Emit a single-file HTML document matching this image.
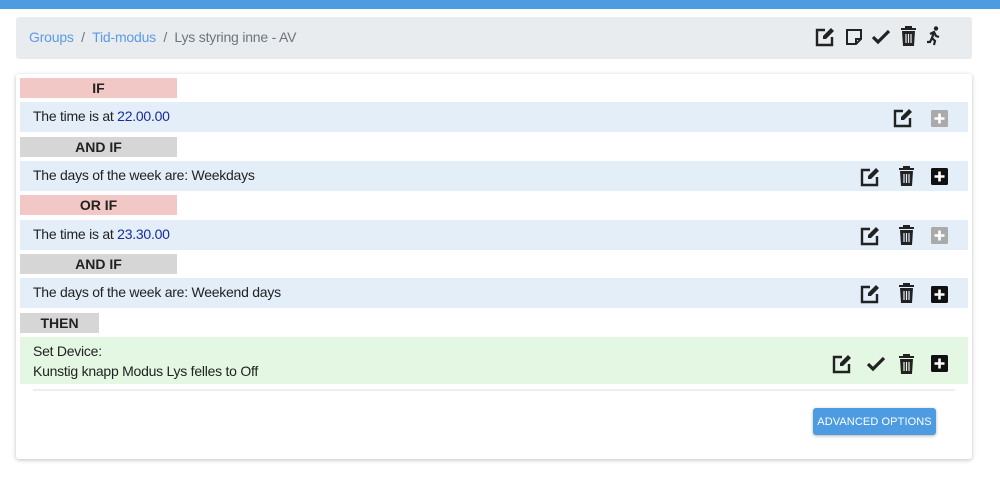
<!DOCTYPE html>
<html><head><meta charset="utf-8"><style>
*{box-sizing:border-box;margin:0;padding:0}
body{width:1000px;height:481px;background:#fff;font-family:"Liberation Sans",sans-serif;font-size:14px;color:#222;position:relative;overflow:hidden}
.abs{position:absolute}
.top{left:0;top:0;width:1000px;height:9px;background:#4d9be0}
.bc{left:16px;top:17px;width:956px;height:42px;background:#e9ecef;border-radius:3px}
.bc .t{position:absolute;left:13px;top:12px;font-size:14px;letter-spacing:-0.2px;color:#6c757d;white-space:nowrap}
.bc a{color:#5b9be6;text-decoration:none}
.card{left:16px;top:74px;width:956px;height:385px;background:#fff;border-radius:3px;box-shadow:0 1px 4px rgba(0,0,0,.25)}
.lab{position:absolute;left:20px;width:157px;height:20px;font-weight:bold;font-size:14px;text-align:center;line-height:20px;color:#222}
.pink{background:#f2c8c6}.gray{background:#d6d6d6}
.row{position:absolute;left:20px;width:948px;height:30px;background:#e3eef9;line-height:28px;padding-left:13px;font-size:14px;letter-spacing:-0.25px}
.blue{color:#1a2a9a}
svg{position:absolute}
.btn{left:813px;top:408px;width:123px;height:27px;background:#4d9be0;color:#fff;font-size:11px;text-align:center;line-height:29px;border-radius:3px;box-shadow:0 1px 3px rgba(0,0,0,.3);letter-spacing:.1px}
</style></head><body>
<div class="abs top"></div>
<div class="abs bc"><div class="t"><a>Groups</a>&nbsp; / &nbsp;<a>Tid-modus</a>&nbsp; / &nbsp;Lys styring inne - AV</div></div>
<div class="abs card"></div>

<div class="lab pink" style="top:78px">IF</div>
<div class="row" style="top:102px">The time is at <span class="blue">22.00.00</span></div>
<div class="lab gray" style="top:137px">AND IF</div>
<div class="row" style="top:161px">The days of the week are: Weekdays</div>
<div class="lab pink" style="top:195px">OR IF</div>
<div class="row" style="top:220px">The time is at <span class="blue">23.30.00</span></div>
<div class="lab gray" style="top:254px">AND IF</div>
<div class="row" style="top:278px">The days of the week are: Weekend days</div>
<div class="lab gray" style="top:313px;width:79px">THEN</div>
<div class="row" style="top:337px;height:47px;background:#e3f7e3;line-height:20px;padding-top:4px">Set Device:<br>Kunstig knapp Modus Lys felles to Off</div>
<div class="abs" style="left:33px;top:389px;width:922px;height:2px;background:#eee"></div>
<div class="abs btn">ADVANCED OPTIONS</div>

<svg style="left:815px;top:27px" width="20" height="20" viewBox="0 0 20 20"><path d="M10 3H2v15h15v-8" fill="none" stroke="#222" stroke-width="2.4"/><path d="M16 1l3 3-8 8H8V9z" fill="#222"/></svg>
<svg style="left:845px;top:28px" width="18" height="18" viewBox="0 0 18 18"><path d="M2 2h14v9l-5 5H2z" fill="none" stroke="#222" stroke-width="2"/><path d="M11 16v-5h5" fill="none" stroke="#222" stroke-width="2"/></svg>
<svg style="left:871px;top:29px" width="20" height="16" viewBox="0 0 20 16"><path d="M2 8l5 5L18 2" fill="none" stroke="#222" stroke-width="3.2"/></svg>
<svg style="left:900px;top:26px" width="17" height="20" viewBox="0 0 17 20"><path d="M1 3h15M6 3V1h5v2" stroke="#222" stroke-width="2" fill="none"/><path d="M2 5h13l-1 15H3z" fill="#222"/><path d="M6 8v9M8.5 8v9M11 8v9" stroke="#e9ecef" stroke-width="1.2"/></svg>
<svg style="left:926px;top:26px" width="16" height="20" viewBox="0 0 16 20"><circle cx="10" cy="2.5" r="2.2" fill="#222"/><path d="M4 8l4-2 2 4 3 1M8 6l-2 6 3 3-1 4M6 12l-2 4-3 0" fill="none" stroke="#222" stroke-width="2.2"/></svg>

<svg style="left:893px;top:108px" width="20" height="20" viewBox="0 0 20 20"><path d="M10 3H2v15h15v-8" fill="none" stroke="#222" stroke-width="2.4"/><path d="M16 1l3 3-8 8H8V9z" fill="#222"/></svg>
<svg style="left:931px;top:110px" width="17" height="17" viewBox="0 0 17 17"><rect width="17" height="17" rx="1.5" fill="#aaa"/><path d="M8.5 3.5v10M3.5 8.5h10" stroke="#fff" stroke-width="2.6"/></svg>

<svg style="left:860px;top:167px" width="20" height="20" viewBox="0 0 20 20"><path d="M10 3H2v15h15v-8" fill="none" stroke="#222" stroke-width="2.4"/><path d="M16 1l3 3-8 8H8V9z" fill="#222"/></svg>
<svg style="left:898px;top:166px" width="17" height="20" viewBox="0 0 17 20"><path d="M1 3h15M6 3V1h5v2" stroke="#222" stroke-width="2" fill="none"/><path d="M2 5h13l-1 15H3z" fill="#222"/><path d="M6 8v9M8.5 8v9M11 8v9" stroke="#e3eef9" stroke-width="1.2"/></svg>
<svg style="left:931px;top:168px" width="17" height="17" viewBox="0 0 17 17"><rect width="17" height="17" rx="1.5" fill="#111"/><path d="M8.5 3.5v10M3.5 8.5h10" stroke="#fff" stroke-width="2.6"/></svg>

<svg style="left:860px;top:226px" width="20" height="20" viewBox="0 0 20 20"><path d="M10 3H2v15h15v-8" fill="none" stroke="#222" stroke-width="2.4"/><path d="M16 1l3 3-8 8H8V9z" fill="#222"/></svg>
<svg style="left:898px;top:225px" width="17" height="20" viewBox="0 0 17 20"><path d="M1 3h15M6 3V1h5v2" stroke="#222" stroke-width="2" fill="none"/><path d="M2 5h13l-1 15H3z" fill="#222"/><path d="M6 8v9M8.5 8v9M11 8v9" stroke="#e3eef9" stroke-width="1.2"/></svg>
<svg style="left:931px;top:227px" width="17" height="17" viewBox="0 0 17 17"><rect width="17" height="17" rx="1.5" fill="#aaa"/><path d="M8.5 3.5v10M3.5 8.5h10" stroke="#fff" stroke-width="2.6"/></svg>

<svg style="left:860px;top:284px" width="20" height="20" viewBox="0 0 20 20"><path d="M10 3H2v15h15v-8" fill="none" stroke="#222" stroke-width="2.4"/><path d="M16 1l3 3-8 8H8V9z" fill="#222"/></svg>
<svg style="left:898px;top:283px" width="17" height="20" viewBox="0 0 17 20"><path d="M1 3h15M6 3V1h5v2" stroke="#222" stroke-width="2" fill="none"/><path d="M2 5h13l-1 15H3z" fill="#222"/><path d="M6 8v9M8.5 8v9M11 8v9" stroke="#e3eef9" stroke-width="1.2"/></svg>
<svg style="left:931px;top:286px" width="17" height="17" viewBox="0 0 17 17"><rect width="17" height="17" rx="1.5" fill="#111"/><path d="M8.5 3.5v10M3.5 8.5h10" stroke="#fff" stroke-width="2.6"/></svg>

<svg style="left:832px;top:354px" width="20" height="20" viewBox="0 0 20 20"><path d="M10 3H2v15h15v-8" fill="none" stroke="#222" stroke-width="2.4"/><path d="M16 1l3 3-8 8H8V9z" fill="#222"/></svg>
<svg style="left:866px;top:356px" width="20" height="16" viewBox="0 0 20 16"><path d="M2 8l5 5L18 2" fill="none" stroke="#222" stroke-width="3.2"/></svg>
<svg style="left:898px;top:354px" width="17" height="20" viewBox="0 0 17 20"><path d="M1 3h15M6 3V1h5v2" stroke="#222" stroke-width="2" fill="none"/><path d="M2 5h13l-1 15H3z" fill="#222"/><path d="M6 8v9M8.5 8v9M11 8v9" stroke="#e3f7e3" stroke-width="1.2"/></svg>
<svg style="left:931px;top:355px" width="17" height="17" viewBox="0 0 17 17"><rect width="17" height="17" rx="1.5" fill="#111"/><path d="M8.5 3.5v10M3.5 8.5h10" stroke="#fff" stroke-width="2.6"/></svg>
</body></html>
